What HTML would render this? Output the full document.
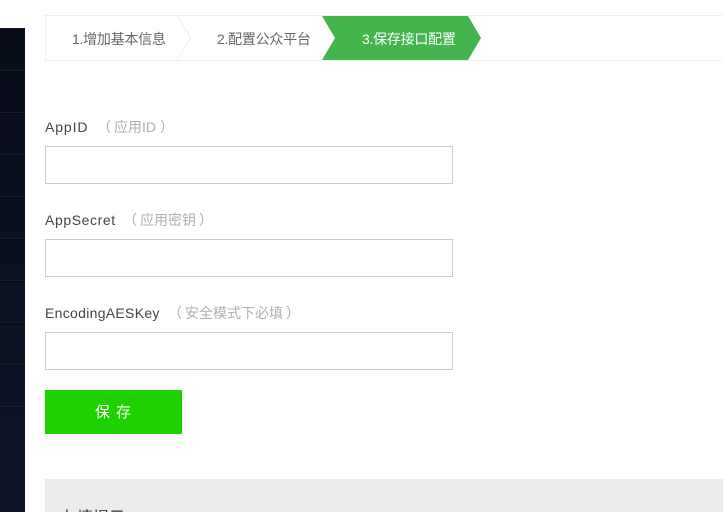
<!DOCTYPE html>
<html><head><meta charset="utf-8">
<style>
html,body{margin:0;padding:0;width:723px;height:512px;overflow:hidden;background:#fff}
body{position:relative;font-family:"Liberation Sans","WenQuanYi Zen Hei","Noto Sans CJK SC",sans-serif;font-size:14px;color:#333}
.abs{position:absolute;white-space:nowrap}
#side{position:absolute;left:0;top:28px;width:25px;height:484px;background:linear-gradient(#090d1a,#0d1429)}
.sep{position:absolute;left:0;width:25px;height:2px;background:linear-gradient(#151c36 50%,#05070f 50%)}
.lab{font-size:14px;line-height:20px;color:#444;left:45px}
.hint{font-size:14px;line-height:20px;color:#b0b0b0}
.inp{position:absolute;left:45px;width:406px;height:36px;border:1px solid #ccc;background:#fff}
.st{font-size:14px;line-height:20px;top:29px;color:#666;letter-spacing:-.25px}
</style></head><body>
<div id="side"></div>
<div class="sep" style="top:28px"></div>
<div class="sep" style="top:70px"></div>
<div class="sep" style="top:112px"></div>
<div class="sep" style="top:154px"></div>
<div class="sep" style="top:196px"></div>
<div class="sep" style="top:238px"></div>
<div class="sep" style="top:280px"></div>
<div class="sep" style="top:322px"></div>
<div class="sep" style="top:364px"></div>
<div class="sep" style="top:406px;height:1px;background:#151d33"></div>

<svg class="abs" style="left:0;top:0" width="723" height="70" viewBox="0 0 723 70">
<rect x="45.5" y="15.5" width="690" height="45" fill="#fff" stroke="#eee"/>
<path d="M177 15.5L190.500 38L177 60.500" fill="#fff" stroke="#eee"/>
<path d="M322 16H468L481 38L468 60H322L335 38Z" fill="#43b54c"/>
</svg>
<div class="abs st" style="left:72px">1.增加基本信息</div>
<div class="abs st" style="left:217px">2.配置公众平台</div>
<div class="abs st" style="left:362px;color:#fff">3.保存接口配置</div>

<div class="abs lab" style="top:117px;letter-spacing:.9px">AppID</div>
<div class="abs hint" style="left:97px;top:117px">（</div>
<div class="abs hint" style="left:114px;top:117px">应用ID</div>
<div class="abs hint" style="left:160px;top:117px">）</div>
<div class="inp" style="top:146px"></div>

<div class="abs lab" style="top:210px;letter-spacing:.6px">AppSecret</div>
<div class="abs hint" style="left:123px;top:210px">（</div>
<div class="abs hint" style="left:140px;top:210px">应用密钥</div>
<div class="abs hint" style="left:199px;top:210px">）</div>
<div class="inp" style="top:239px"></div>

<div class="abs lab" style="top:303px;letter-spacing:.3px">EncodingAESKey</div>
<div class="abs hint" style="left:168px;top:303px">（</div>
<div class="abs hint" style="left:185px;top:303px">安全模式下必填</div>
<div class="abs hint" style="left:286px;top:303px">）</div>
<div class="inp" style="top:332px"></div>

<div class="abs" style="left:45px;top:390px;width:137px;height:44px;background:#1fd100"></div>
<div class="abs" style="left:95px;top:403px;color:#fff;line-height:20px;font-size:15px">保</div>
<div class="abs" style="left:116px;top:403px;color:#fff;line-height:20px;font-size:15px">存</div>

<div class="abs" style="left:45px;top:479px;width:678px;height:33px;background:#ececec;overflow:hidden">
<div class="abs" style="left:16px;top:30px;font-size:16px;line-height:20px;color:#333">友情提示</div>
</div>
</body></html>
